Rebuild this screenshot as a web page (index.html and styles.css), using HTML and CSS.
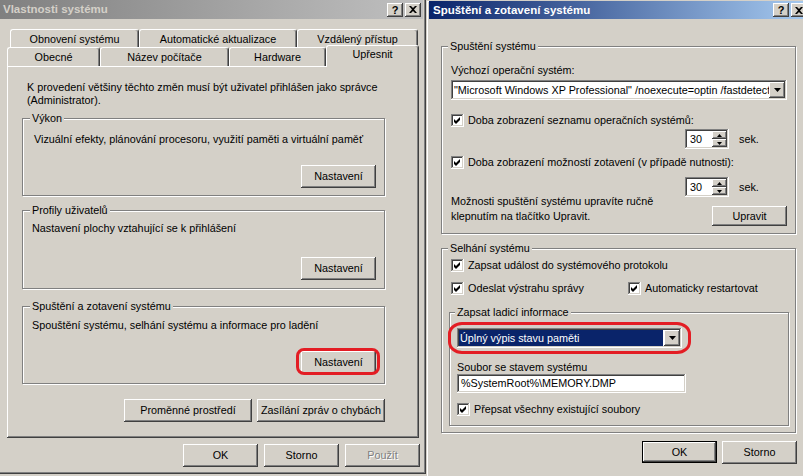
FILE: index.html
```html
<!DOCTYPE html>
<html lang="cs">
<head>
<meta charset="utf-8">
<title>Vlastnosti systému</title>
<link rel="stylesheet" href="styles.css">
</head>
<body>
<div class="desk">
  <section class="win win-left">
    <div class="titlebar tb-inactive">
      <span class="ttl">Vlastnosti systému</span>
      <span class="tbtns">
        <span class="tbtn">?</span>
        <span class="tbtn"><svg width="8" height="7" viewBox="0 0 8 7"><path d="M0 0h2l2 2 2-2h2L5 3.5 8 7H6L4 5 2 7H0l3-3.5z" fill="#000"/></svg></span>
      </span>
    </div>
    <div class="tabs">
      <div class="tabrow row1">
        <div class="tab tw-obn">Obnovení systému</div>
        <div class="tab tw-aut">Automatické aktualizace</div>
        <div class="tab tw-vzd">Vzdálený přístup</div>
      </div>
      <div class="tabrow row2">
        <div class="tab tw-obe">Obecné</div>
        <div class="tab tw-naz">Název počítače</div>
        <div class="tab tw-hw">Hardware</div>
        <div class="tab tab-sel tw-upr">Upřesnit</div>
      </div>
    </div>
    <div class="panel">
      <p class="intro">K provedení většiny těchto změn musí být uživatel přihlášen jako správce<br>(Administrator).</p>
      <div class="group lg g-vykon">
        <span class="glabel">Výkon</span>
        <p class="gtext">Vizuální efekty, plánování procesoru, využití paměti a virtuální paměť</p>
        <button type="button" class="btn gbtn">Nastavení</button>
      </div>
      <div class="group lg g-prof">
        <span class="glabel">Profily uživatelů</span>
        <p class="gtext">Nastavení plochy vztahující se k přihlášení</p>
        <button type="button" class="btn gbtn">Nastavení</button>
      </div>
      <div class="group lg g-spus">
        <span class="glabel">Spuštění a zotavení systému</span>
        <p class="gtext">Spouštění systému, selhání systému a informace pro ladění</p>
        <span class="hl"><button type="button" class="btn">Nastavení</button></span>
      </div>
      <div class="pbtns">
        <button type="button" class="btn btn-wide">Proměnné prostředí</button>
        <button type="button" class="btn btn-wide">Zasílání zpráv o chybách</button>
      </div>
    </div>
    <div class="dbtns">
      <button type="button" class="btn">OK</button>
      <button type="button" class="btn">Storno</button>
      <button type="button" class="btn btn-dis">Použít</button>
    </div>
  </section>

  <section class="win win-right">
    <div class="titlebar tb-active">
      <span class="ttl">Spuštění a zotavení systému</span>
      <span class="tbtns">
        <span class="tbtn">?</span>
        <span class="tbtn"><svg width="8" height="7" viewBox="0 0 8 7"><path d="M0 0h2l2 2 2-2h2L5 3.5 8 7H6L4 5 2 7H0l3-3.5z" fill="#000"/></svg></span>
      </span>
    </div>

    <div class="group rg rg1">
      <span class="glabel">Spuštění systému</span>
      <p class="lbl-os">Výchozí operační systém:</p>
      <div class="combo combo1">
        <span class="ctext">"Microsoft Windows XP Professional" /noexecute=optin /fastdetect</span>
        <span class="dd"><svg width="7" height="4" viewBox="0 0 7 4"><path d="M0 0h7L3.5 4z" fill="#000"/></svg></span>
      </div>
      <div class="cbrow cbr1">
        <span class="cb"><svg width="9" height="9" viewBox="0 0 9 9"><path d="M1 3v3l2 2 4-4V1L3 5z" fill="#000"/></svg></span>
        <span>Doba zobrazení seznamu operačních systémů:</span>
      </div>
      <div class="spinrow sr1">
        <div class="spin">
          <span class="spinval">30</span>
          <span class="spinbtns">
            <span class="sb"><svg width="5" height="3" viewBox="0 0 5 3"><path d="M0 3h5L2.5 0z" fill="#000"/></svg></span>
            <span class="sb"><svg width="5" height="3" viewBox="0 0 5 3"><path d="M0 0h5L2.5 3z" fill="#000"/></svg></span>
          </span>
        </div>
        <span>sek.</span>
      </div>
      <div class="cbrow cbr2">
        <span class="cb"><svg width="9" height="9" viewBox="0 0 9 9"><path d="M1 3v3l2 2 4-4V1L3 5z" fill="#000"/></svg></span>
        <span>Doba zobrazení možností zotavení (v případě nutnosti):</span>
      </div>
      <div class="rgrid">
        <p class="edittext">Možnosti spuštění systému upravíte ručně<br>klepnutím na tlačítko Upravit.</p>
        <div class="rcol">
          <div class="spinrow">
            <div class="spin">
              <span class="spinval">30</span>
              <span class="spinbtns">
                <span class="sb"><svg width="5" height="3" viewBox="0 0 5 3"><path d="M0 3h5L2.5 0z" fill="#000"/></svg></span>
                <span class="sb"><svg width="5" height="3" viewBox="0 0 5 3"><path d="M0 0h5L2.5 3z" fill="#000"/></svg></span>
              </span>
            </div>
            <span>sek.</span>
          </div>
          <button type="button" class="btn btn-upr">Upravit</button>
        </div>
      </div>
    </div>

    <div class="group rg rg2">
      <span class="glabel">Selhání systému</span>
      <div class="cbrow cbrA">
        <span class="cb"><svg width="9" height="9" viewBox="0 0 9 9"><path d="M1 3v3l2 2 4-4V1L3 5z" fill="#000"/></svg></span>
        <span>Zapsat událost do systémového protokolu</span>
      </div>
      <div class="cbrow cbrB">
        <span class="cbitem cbi1">
          <span class="cb"><svg width="9" height="9" viewBox="0 0 9 9"><path d="M1 3v3l2 2 4-4V1L3 5z" fill="#000"/></svg></span>
          <span>Odeslat výstrahu správy</span>
        </span>
        <span class="cbitem">
          <span class="cb"><svg width="9" height="9" viewBox="0 0 9 9"><path d="M1 3v3l2 2 4-4V1L3 5z" fill="#000"/></svg></span>
          <span>Automaticky restartovat</span>
        </span>
      </div>
      <div class="group ig">
        <span class="glabel">Zapsat ladicí informace</span>
        <div class="combo combo2">
          <span class="ctext csel">Úplný výpis stavu paměti</span>
          <span class="dd"><svg width="7" height="4" viewBox="0 0 7 4"><path d="M0 0h7L3.5 4z" fill="#000"/></svg></span>
        </div>
        <p class="lbl-file">Soubor se stavem systému</p>
        <div class="field">%SystemRoot%\MEMORY.DMP</div>
        <div class="cbrow cbrC">
          <span class="cb"><svg width="9" height="9" viewBox="0 0 9 9"><path d="M1 3v3l2 2 4-4V1L3 5z" fill="#000"/></svg></span>
          <span>Přepsat všechny existující soubory</span>
        </div>
      </div>
    </div>

    <div class="rbtns">
      <button type="button" class="btn btn-def">OK</button>
      <button type="button" class="btn">Storno</button>
    </div>
  </section>
</div>
</body>
</html>
```
FILE: styles.css
```css
* { box-sizing: border-box; }
html, body { margin: 0; padding: 0; }
body {
  width: 803px;
  height: 476px;
  overflow: hidden;
  background: #d4d0c8;
  font-family: "Liberation Sans", Arial, sans-serif;
  font-size: 10.8px;
  line-height: 13px;
  color: #000;
}
p { margin: 0; white-space: nowrap; }

.desk {
  display: flex;
  align-items: flex-start;
  width: 803px;
  height: 476px;
  overflow: hidden;
}
.win {
  background: #d4d0c8;
  display: flex;
  flex-direction: column;
  flex: none;
}
.win-left {
  width: 426px;
  height: 474px;
  padding: 0 3px 0 0;
  box-shadow: inset -1px -1px #404040, inset -2px -2px #808080;
}
.win-right {
  width: 384px;
  height: 476px;
  padding: 1px 3px 0 3px;
  box-shadow: inset 1px 1px #d4d0c8, inset 2px 2px #fff;
}

/* title bars */
.titlebar {
  flex: none;
  height: 19px;
  display: flex;
  align-items: center;
  justify-content: space-between;
  padding: 0 2px 0 3px;
  font-weight: bold;
  font-size: 11.5px;
  white-space: nowrap;
}
.tb-inactive {
  background: linear-gradient(to right, #808080, #c0c0c0);
  color: #d4d0c8;
}
.tb-active {
  height: 18px;
  padding: 0 0 0 4px;
  background: linear-gradient(to right, #0a246a, #a6caf0);
  color: #fff;
}
.tbtns { display: flex; gap: 2px; }
.tbtn {
  width: 16px;
  height: 14px;
  display: flex;
  align-items: center;
  justify-content: center;
  background: #d4d0c8;
  color: #000;
  font-size: 11px;
  font-weight: bold;
  line-height: 14px;
  box-shadow: inset -1px -1px #404040, inset 1px 1px #fff, inset -2px -2px #808080;
}

/* tabs */
.tabs { flex: none; margin-top: 10px; display: flex; flex-direction: column; }
.tabrow { display: flex; }
.row1 { margin-left: 10px; height: 18px; }
.row2 { margin-left: 7px; height: 19px; }
.tab {
  flex: none;
  text-align: center;
  padding-top: 3px;
  white-space: nowrap;
  background: #d4d0c8;
  border-top: 1px solid #fff;
  border-left: 1px solid #fff;
  border-right: 1px solid #404040;
  border-radius: 3px 3px 0 0;
  box-shadow: inset -1px 0 #808080;
}
.tw-obn { width: 129px; }
.tw-aut { width: 158px; }
.tw-vzd { width: 121px; }
.tw-obe { width: 93px; }
.tw-naz { width: 129px; }
.tw-hw { width: 97px; }
.tw-upr { width: 93px; }
.tab-sel {
  position: relative;
  z-index: 2;
  height: 22px;
  margin-top: -2px;
  margin-bottom: -1px;
  padding-top: 2px;
}

/* tab page */
.panel {
  flex: none;
  margin-left: 7px;
  width: 412px;
  height: 372px;
  display: flex;
  flex-direction: column;
  box-shadow: inset -1px -1px #404040, inset 1px 1px #fff, inset -2px -2px #808080;
}
.intro { margin: 15px 0 0 20px; }

/* group boxes */
.group {
  flex: none;
  display: flex;
  flex-direction: column;
  border: 1px solid #808080;
  box-shadow: inset 1px 1px #fff, 1px 1px #fff;
}
.glabel {
  align-self: flex-start;
  height: 13px;
  margin-top: -7px;
  margin-bottom: -6px;
  padding: 0 2px;
  background: #d4d0c8;
  line-height: 13px;
  white-space: nowrap;
}
.lg { margin-left: 15px; width: 363px; padding: 0 8px 0 9px; }
.lg .glabel { margin-left: -2px; }
.gbtn, .hl { align-self: flex-end; }
.g-vykon { margin-top: 11px; height: 78px; }
.g-vykon .gtext { margin-top: 14px; padding-left: 2px; }
.g-vykon .gbtn { margin-top: 19px; }
.g-prof { margin-top: 14px; height: 79px; }
.g-prof .gtext { margin-top: 11px; }
.g-prof .gbtn { margin-top: 22px; }
.g-spus { margin-top: 17px; height: 78px; }
.g-spus .gtext { margin-top: 12px; }
.g-spus .hl { margin-top: 19px; }

/* buttons */
.btn {
  flex: none;
  width: 75px;
  height: 23px;
  margin: 0;
  padding: 0;
  border: 0;
  background: #d4d0c8;
  font: inherit;
  line-height: 13px;
  color: #000;
  display: flex;
  align-items: center;
  justify-content: center;
  white-space: nowrap;
  box-shadow: inset -1px -1px #404040, inset 1px 1px #fff, inset -2px -2px #808080;
}
.btn-wide { width: 128px; }
.btn-dis { color: #808080; text-shadow: 1px 1px 0 #fff; }
.btn-def { border: 1px solid #000; height: 22px; }
.btn-upr { height: 20px; align-self: flex-end; margin-top: 9px; }

.pbtns {
  flex: none;
  display: flex;
  justify-content: flex-end;
  gap: 5px;
  margin: 15px 0 0 15px;
  width: 363px;
}
.dbtns {
  flex: none;
  display: flex;
  justify-content: flex-end;
  gap: 6px;
  margin-top: 6px;
  width: 420px;
}

/* highlight marks */
.hl { position: relative; display: flex; }
.hl::after {
  content: "";
  position: absolute;
  left: -5px;
  right: -4px;
  top: -3px;
  bottom: -1px;
  border: 3px solid #e31d24;
  border-radius: 8px;
  pointer-events: none;
}

/* right dialog */
.rg { margin-left: 12px; width: 355px; }
.rg1 { margin-top: 27px; height: 188px; padding: 0 8px 0 9px; }
.rg1 .glabel { margin-left: -3px; }
.lbl-os { margin-top: 17px; }

.combo {
  flex: none;
  height: 20px;
  display: flex;
  align-items: stretch;
  padding: 2px;
  background: #fff;
  box-shadow: inset -1px -1px #fff, inset 1px 1px #808080, inset -2px -2px #d4d0c8, inset 2px 2px #404040;
}
.combo1 { margin-top: 3px; }
.ctext {
  flex: 1;
  min-width: 0;
  overflow: hidden;
  white-space: nowrap;
  padding-left: 1px;
  line-height: 16px;
}
.csel { background: #0a246a; color: #fff; }
.dd {
  flex: none;
  width: 16px;
  height: 16px;
  display: flex;
  align-items: center;
  justify-content: center;
  background: #d4d0c8;
  box-shadow: inset -1px -1px #404040, inset 1px 1px #fff, inset -2px -2px #808080;
}
.dd svg, .sb svg, .cb svg, .tbtn svg { display: block; }

.cbrow {
  flex: none;
  display: flex;
  align-items: center;
  gap: 4px;
  height: 13px;
  white-space: nowrap;
}
.cbitem { display: flex; align-items: center; gap: 4px; }
.cbi1 { width: 177px; }
.cb {
  flex: none;
  width: 13px;
  height: 13px;
  padding: 2px;
  background: #fff;
  box-shadow: inset -1px -1px #fff, inset 1px 1px #808080, inset -2px -2px #d4d0c8, inset 2px 2px #404040;
}
.cbr1 { margin-top: 14px; }
.cbr2 { margin-top: 7px; }

.spinrow {
  flex: none;
  display: flex;
  align-items: center;
  gap: 10px;
  height: 20px;
}
.sr1 { margin-top: 2px; padding-left: 234px; }
.spin {
  flex: none;
  width: 44px;
  height: 20px;
  display: flex;
  padding: 2px;
  background: #fff;
  box-shadow: inset -1px -1px #fff, inset 1px 1px #808080, inset -2px -2px #d4d0c8, inset 2px 2px #404040;
}
.spinval { flex: 1; padding-left: 3px; line-height: 16px; }
.spinbtns { flex: none; width: 15px; display: flex; flex-direction: column; }
.sb {
  flex: 1;
  display: flex;
  align-items: center;
  justify-content: center;
  background: #d4d0c8;
  box-shadow: inset -1px -1px #404040, inset 1px 1px #fff, inset -2px -2px #808080;
}

.rgrid {
  flex: none;
  margin-top: 8px;
  display: grid;
  grid-template-columns: 1fr 102px;
}
.edittext { align-self: end; line-height: 15px; padding-bottom: 2px; }
.rcol { display: flex; flex-direction: column; }

.rg2 { margin-top: 14px; height: 185px; padding: 0 6px 0 8px; }
.rg2 > .glabel { margin-left: -2px; }
.cbrA { margin-top: 10px; margin-left: 1px; }
.cbrB { margin-top: 10px; margin-left: 1px; gap: 0; }

.ig { margin-top: 17px; margin-left: -1px; width: 340px; height: 114px; padding: 0 0 0 7px; }
.ig .glabel { margin-left: -2px; }
.combo2 { position: relative; margin-top: 15px; width: 225px; }
.combo2 .csel { margin-right: 1px; }
.combo2::after {
  content: "";
  position: absolute;
  left: -9px;
  right: -9px;
  top: -6px;
  bottom: -6px;
  border: 3px solid #e31d24;
  border-radius: 14px / 12px;
  pointer-events: none;
}
.lbl-file { margin-top: 13px; }
.field {
  flex: none;
  width: 229px;
  height: 19px;
  padding: 2px 2px 0 4px;
  line-height: 15px;
  background: #fff;
  white-space: nowrap;
  box-shadow: inset -1px -1px #fff, inset 1px 1px #808080, inset -2px -2px #d4d0c8, inset 2px 2px #404040;
}
.cbrC { margin-top: 10px; }

.rbtns {
  flex: none;
  display: flex;
  justify-content: flex-end;
  gap: 5px;
  margin: 8px 0 0 12px;
  width: 356px;
}
```
